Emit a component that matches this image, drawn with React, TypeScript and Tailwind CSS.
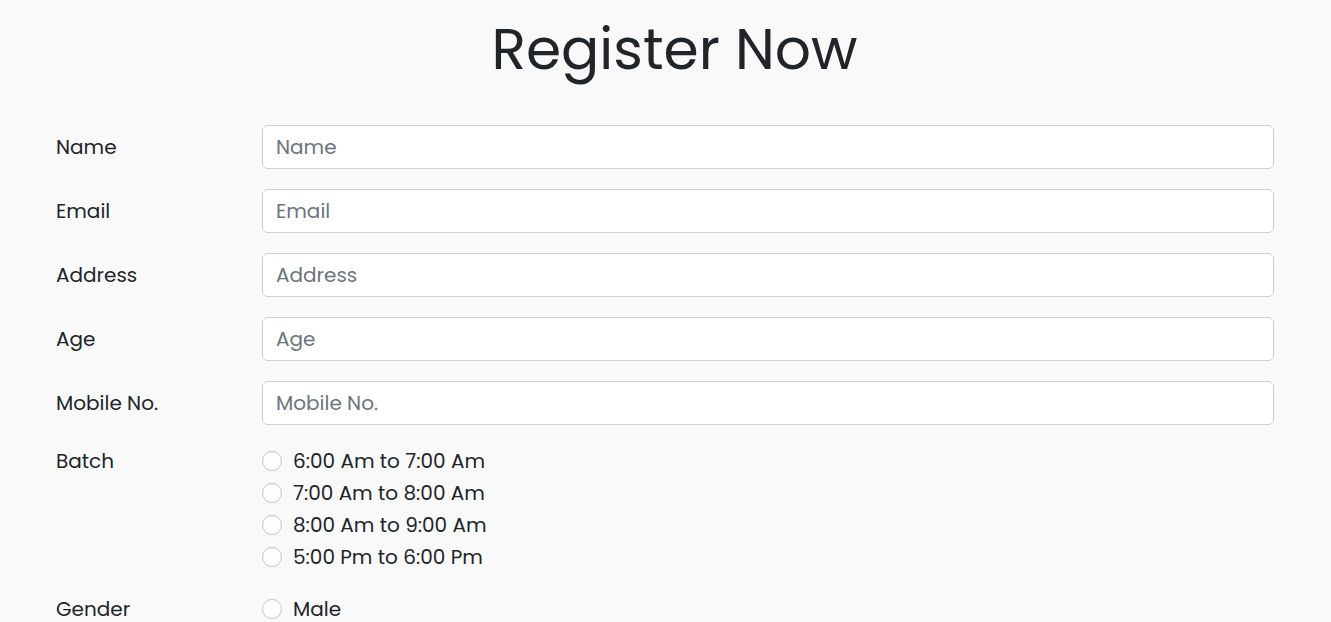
import React from "react";

const fields = ["Name", "Email", "Address", "Age", "Mobile No."];
const batches = ["6:00 Am to 7:00 Am", "7:00 Am to 8:00 Am", "8:00 Am to 9:00 Am", "5:00 Pm to 6:00 Pm"];

function Radio({ label, name }: { label: string; name: string }) {
  return (
    <label className="flex h-8 items-center gap-[11px]">
      <span className="h-5 w-5 shrink-0 rounded-full border border-[#c4c4c4] bg-white" />
      <input type="radio" name={name} className="hidden" />
      <span className="leading-8">{label}</span>
    </label>
  );
}

export default function App() {
  return (
    <div
      className="min-h-[622px] bg-[#f9f9f9] text-[#212529] text-[20px]"
      style={{ fontFamily: "Poppins, Inter, 'Noto Sans', sans-serif" }}
    >
      <h1 className="pt-[9px] pb-[36px] pl-[18px] text-center text-[56.7px] leading-[80px] font-normal">Register Now</h1>
      <div className="flex flex-col gap-5 pl-14 pr-[57px]">
        {fields.map((f) => (
          <div key={f} className="flex items-center">
            <div className="w-[206px] shrink-0">{f}</div>
            <input
              placeholder={f}
              className="h-11 flex-1 rounded-md border border-[#d0d0d0] bg-white px-[13px] text-[20px] placeholder:text-[#6c757d] outline-none"
            />
          </div>
        ))}
        <div className="flex items-start">
          <div className="w-[206px] shrink-0 leading-8">Batch</div>
          <div className="flex flex-col">
            {batches.map((b) => (
              <Radio key={b} label={b} name="batch" />
            ))}
          </div>
        </div>
        <div className="flex items-start">
          <div className="w-[206px] shrink-0 leading-8">Gender</div>
          <div className="flex flex-col">
            <Radio label="Male" name="gender" />
            <Radio label="Female" name="gender" />
          </div>
        </div>
      </div>
    </div>
  );
}
